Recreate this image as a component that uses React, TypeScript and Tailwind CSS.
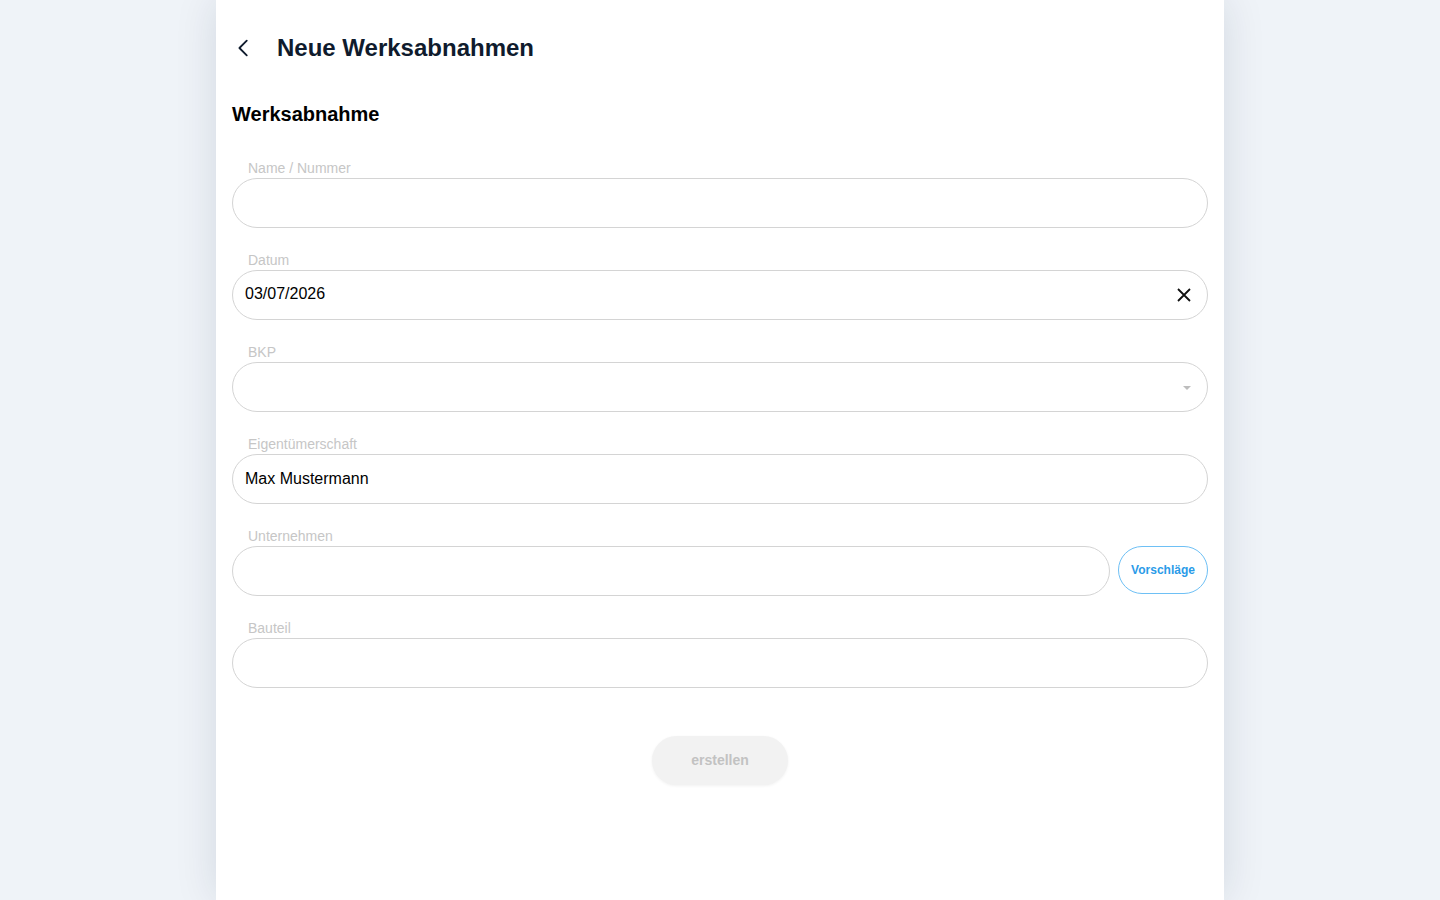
import React from 'react';

const font = { fontFamily: '"Liberation Sans", Arial, sans-serif' };

function Label({ children }: { children: React.ReactNode }) {
  return <div className="px-4 text-[14px] leading-4 text-[#c6c6c6] mb-[2px]">{children}</div>;
}

function Field({ label, children }: { label: string; children?: React.ReactNode }) {
  return (
    <div className="mb-[24px]">
      <Label>{label}</Label>
      {children ?? <div className="h-[50px] rounded-full border border-[#d4d4d4] bg-white" />}
    </div>
  );
}

export default function App() {
  return (
    <div className="min-h-[900px] bg-[#eff3f8] flex justify-center" style={font}>
      <div className="w-[1008px] min-h-[900px] bg-white shadow-[0_0_40px_rgba(15,30,60,0.12)] px-4">
        {/* Kopfzeile */}
        <div className="flex items-center h-[96px]">
          <button className="w-[24px] h-[24px] flex items-center justify-center text-[#0f1b2d]">
            <svg width="22" height="22" viewBox="0 0 24 24" fill="none" stroke="currentColor" strokeWidth="2" strokeLinecap="round" strokeLinejoin="round">
              <path d="M15 4l-8 8 8 8" />
            </svg>
          </button>
          <h1 className="ml-[21px] text-[24px] font-bold text-[#0f1b2d]">Neue Werksabnahmen</h1>
        </div>

        <h2 className="mt-[6px] text-[20px] font-bold text-black leading-6 mb-[34px]">Werksabnahme</h2>

        <Field label="Name / Nummer" />

        <Field label="Datum">
          <div className="h-[50px] rounded-full border border-[#d4d4d4] flex items-center pl-3 pr-[15px]">
            <span className="flex-1 text-[16px] text-black -mt-[2px]">03/07/2026</span>
            <svg width="16" height="16" viewBox="0 0 16 16" stroke="#111" strokeWidth="1.8">
              <path d="M2 2l12 12M14 2L2 14" />
            </svg>
          </div>
        </Field>

        <Field label="BKP">
          <div className="h-[50px] rounded-full border border-[#d4d4d4] flex items-center justify-end pr-[15px]">
            <svg width="10" height="6" viewBox="0 0 10 6" className="mt-[2px]">
              <path d="M1 1h8L5 5z" fill="#bdbdbd" />
            </svg>
          </div>
        </Field>

        <Field label="Eigentümerschaft">
          <div className="h-[50px] rounded-full border border-[#d4d4d4] flex items-center pl-3">
            <span className="text-[16px] text-black">Max Mustermann</span>
          </div>
        </Field>

        <Field label="Unternehmen">
          <div className="flex items-start gap-2">
            <div className="flex-1 h-[50px] rounded-full border border-[#d4d4d4]" />
            <button className="w-[90px] h-[48px] rounded-full border border-[#6ec0f5] text-[#2a9be8] text-[12px] font-bold">
              Vorschläge
            </button>
          </div>
        </Field>

        <Field label="Bauteil" />

        <div className="flex justify-center mt-[48px]">
          <button className="w-[136px] h-[49px] rounded-full bg-[#f2f2f2] text-[#c2c2c2] text-[14px] font-bold shadow-[0_1px_3px_rgba(0,0,0,0.06)]">
            erstellen
          </button>
        </div>
      </div>
    </div>
  );
}
